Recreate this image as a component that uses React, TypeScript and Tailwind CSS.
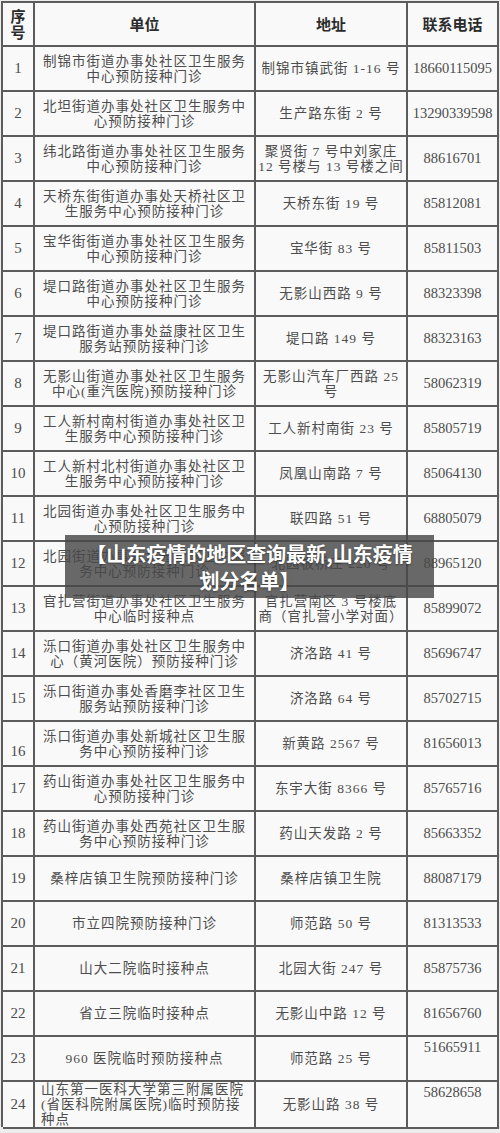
type Row = {
  n: string;
  unit: string[];
  addr: string[];
  tel: string;
  left?: boolean;
  telTop?: boolean;
  numLow?: boolean;
};

const rows: Row[] = [
  { n: '1', unit: ['制锦市街道办事处社区卫生服务', '中心预防接种门诊'], addr: ['制锦市镇武街 1-16 号'], tel: '18660115095' },
  { n: '2', unit: ['北坦街道办事处社区卫生服务中', '心预防接种门诊'], addr: ['生产路东街 2 号'], tel: '13290339598' },
  { n: '3', unit: ['纬北路街道办事处社区卫生服务', '中心预防接种门诊'], addr: ['聚贤街 7 号中刘家庄', '12 号楼与 13 号楼之间'], tel: '88616701' },
  { n: '4', unit: ['天桥东街街道办事处天桥社区卫', '生服务中心预防接种门诊'], addr: ['天桥东街 19 号'], tel: '85812081' },
  { n: '5', unit: ['宝华街街道办事处社区卫生服务', '中心预防接种门诊'], addr: ['宝华街 83 号'], tel: '85811503' },
  { n: '6', unit: ['堤口路街道办事处社区卫生服务', '中心预防接种门诊'], addr: ['无影山西路 9 号'], tel: '88323398' },
  { n: '7', unit: ['堤口路街道办事处益康社区卫生', '服务站预防接种门诊'], addr: ['堤口路 149 号'], tel: '88323163' },
  { n: '8', unit: ['无影山街道办事处社区卫生服务', '中心(重汽医院)预防接种门诊'], addr: ['无影山汽车厂西路 25', '号'], tel: '58062319' },
  { n: '9', unit: ['工人新村南村街道办事处社区卫', '生服务中心预防接种门诊'], addr: ['工人新村南街 23 号'], tel: '85805719' },
  { n: '10', unit: ['工人新村北村街道办事处社区卫', '生服务中心预防接种门诊'], addr: ['凤凰山南路 7 号'], tel: '85064130' },
  { n: '11', unit: ['北园街道办事处社区卫生服务中', '心预防接种门诊'], addr: ['联四路 51 号'], tel: '68805079' },
  { n: '12', unit: ['北园街道办事处北园社区卫生服', '务中心预防接种门诊'], addr: ['北园板桥庄 220 号'], tel: '88965120' },
  { n: '13', unit: ['官扎营街道办事处社区卫生服务', '中心临时接种点'], addr: ['官扎营南区 3 号楼底', '商（官扎营小学对面）'], tel: '85899072' },
  { n: '14', unit: ['泺口街道办事处社区卫生服务中', '心（黄河医院）预防接种门诊'], addr: ['济洛路 41 号'], tel: '85696747' },
  { n: '15', unit: ['泺口街道办事处香磨李社区卫生', '服务站预防接种门诊'], addr: ['济洛路 64 号'], tel: '85702715' },
  { n: '16', unit: ['泺口街道办事处新城社区卫生服', '务中心预防接种门诊'], addr: ['新黄路 2567 号'], tel: '81656013', numLow: true },
  { n: '17', unit: ['药山街道办事处社区卫生服务中', '心预防接种门诊'], addr: ['东宇大街 8366 号'], tel: '85765716' },
  { n: '18', unit: ['药山街道办事处西苑社区卫生服', '务中心预防接种门诊'], addr: ['药山天发路 2 号'], tel: '85663352' },
  { n: '19', unit: ['桑梓店镇卫生院预防接种门诊'], addr: ['桑梓店镇卫生院'], tel: '88087179' },
  { n: '20', unit: ['市立四院预防接种门诊'], addr: ['师范路 50 号'], tel: '81313533' },
  { n: '21', unit: ['山大二院临时接种点'], addr: ['北园大街 247 号'], tel: '85875736' },
  { n: '22', unit: ['省立三院临时接种点'], addr: ['无影山中路 12 号'], tel: '81656760' },
  { n: '23', unit: ['960 医院临时预防接种点'], addr: ['师范路 25 号'], tel: '51665911', telTop: true },
  { n: '24', unit: ['山东第一医科大学第三附属医院', '(省医科院附属医院)临时预防接', '种点'], addr: ['无影山路 38 号'], tel: '58628658', telTop: true, left: true },
];

const grid = 'grid grid-cols-[32px_221px_152px_91px]';
const cell = 'border-r-2 border-b-2 border-[#5c5c5c] flex flex-col justify-center';

export default function App() {
  return (
    <div className="min-h-[1133px] w-[500px] bg-[#ededed] pl-[1px] pt-[1px] font-['Liberation_Serif','Noto_Sans_CJK_SC',serif] text-[#4d4d4d]">
      <div className="relative w-[498px] border-l-2 border-t-2 border-[#5c5c5c] bg-[#f9f9f9]">
        <div className={`${grid} h-[44px] font-['Noto_Sans_CJK_SC',sans-serif] font-bold text-[15px] text-[#2b2b2b]`}>
          <div className={`${cell} items-center leading-[16px]`}>
            <span>序</span>
            <span>号</span>
          </div>
          <div className={`${cell} items-center`}>单位</div>
          <div className={`${cell} items-center`}>地址</div>
          <div className={`${cell} items-center`}>联系电话</div>
        </div>

        {rows.map((r) => (
          <div key={r.n} className={`${grid} h-[45px]`}>
            <div className={`${cell} items-center text-[15px] ${r.numLow ? 'pt-[16px]' : ''}`}>{r.n}</div>
            <div
              className={`${cell} text-[13.5px] leading-[15px] tracking-[1px] ${
                r.left ? 'items-start pl-[6px]' : 'items-center text-center'
              }`}
            >
              {r.unit.map((l) => (
                <span key={l} className="whitespace-nowrap">{l}</span>
              ))}
            </div>
            <div className={`${cell} items-center text-center text-[13.5px] leading-[15px] tracking-[1px]`}>
              {r.addr.map((l) => (
                <span key={l} className="whitespace-nowrap">{l}</span>
              ))}
            </div>
            <div className={`${cell} items-center text-[14.5px] ${r.telTop ? '!justify-start pt-[0px]' : ''}`}>
              {r.tel}
            </div>
          </div>
        ))}

        {/* caption overlay */}
        <div className="absolute left-[62px] top-[532px] flex h-[63px] w-[369px] items-center justify-center bg-[rgba(72,72,72,0.82)] px-[16px] text-center font-['Noto_Sans_CJK_SC',sans-serif] text-[20px] font-bold leading-[27px] text-white [text-shadow:0_1px_2px_rgba(0,0,0,0.4)]">
          【山东疫情的地区查询最新,山东疫情划分名单】
        </div>
      </div>
    </div>
  );
}
